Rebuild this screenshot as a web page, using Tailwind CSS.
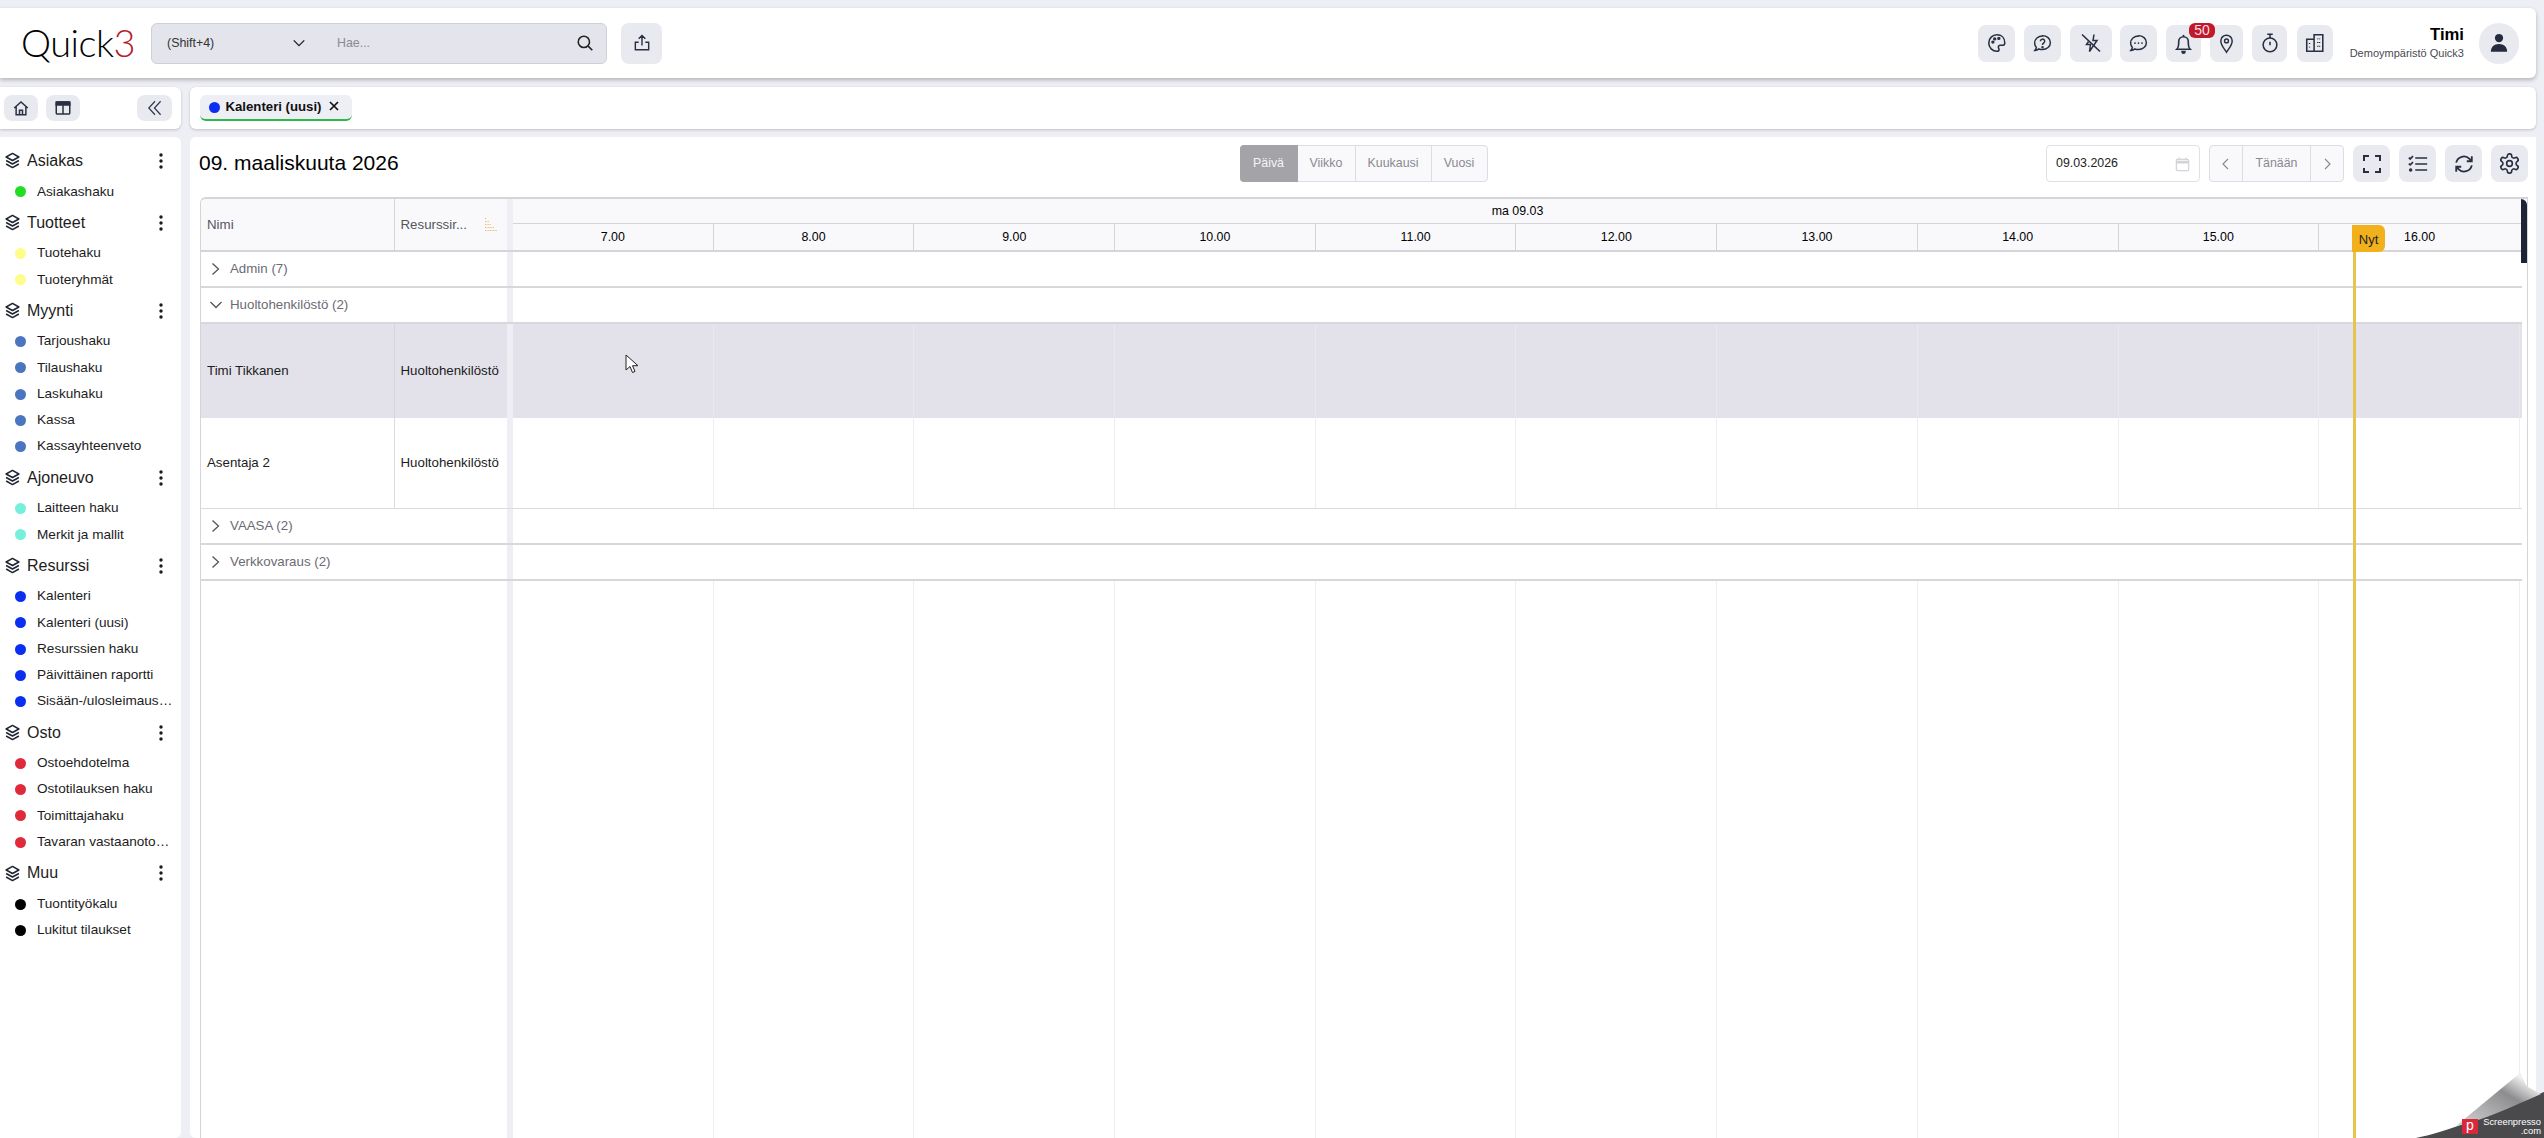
<!DOCTYPE html>
<html lang="fi">
<head>
  <meta charset="UTF-8" />
  <title>Quick3 - Kalenteri</title>
  <script src="https://cdn.jsdelivr.net/npm/@tailwindcss/browser@4"></script>
</head>
<body class="bg-[#eeeef5] h-[1138px] pt-2 overflow-hidden font-['Liberation_Sans',Arial,sans-serif] text-[12.4px] text-[#1c1c22] relative">

  <!-- top bar -->
  <header class="mr-2 h-[70px] bg-white rounded-r-md shadow-[0_2px_4px_rgba(0,0,0,0.25)] flex items-center relative z-10">
    <div class="w-[151px] pl-[21px] font-['Lato',sans-serif] font-light text-[38px] leading-none tracking-[-0.5px] text-black -mt-[2px]">Quick<span class="text-[#b3202e]">3</span></div>
    <div class="w-[456px] h-[41px] bg-[#e4e4ec] border border-[#cfcfd6] rounded-md flex items-center">
      <span class="ml-[15px] w-[125px] text-[#333]">(Shift+4)</span>
      <svg class="w-[14px] h-[14px]" viewBox="0 0 16 16" fill="none" stroke="#222" stroke-width="1.6"><path d="M2 5l6 6 6-6"/></svg>
      <span class="ml-[31px] flex-1 text-[#8b8b92]">Hae...</span>
      <svg class="w-[18px] h-[18px] mr-[12px]" viewBox="0 0 16 16" fill="none" stroke="#222" stroke-width="1.4"><circle cx="7" cy="7" r="5"/><path d="M10.8 10.8L14.5 14.5"/></svg>
    </div>
    <button class="ml-[14px] w-[41px] h-[41px] bg-[#e9e9f0] rounded-lg flex items-center justify-center">
      <svg class="w-[20px] h-[20px]" viewBox="0 0 24 24" fill="none" stroke="#2a3042" stroke-width="1.7"><path d="M12 15V3M8 7l4-4 4 4M8 11H4v9h16v-9h-4"/></svg>
    </button>
    <div class="flex-1"></div>
    <div class="flex items-center mr-[17px]">
      <button class="w-[37px] h-[37px] bg-[#e9e9f0] rounded-lg flex items-center justify-center">
        <svg class="w-[22px] h-[22px]" viewBox="0 0 24 24" fill="none" stroke="#2a3042" stroke-width="1.7"><path d="M12 3a9 9 0 0 0 0 18c1.5 0 2.2-1 2.2-2s-.7-1.5-.7-2.5 1-2 2-2h2.5c1.5 0 2.5-1 2.5-2.5C20.500 6.500 17 3 12 3z"/><circle cx="7.500" cy="11" r="1" fill="#2a3042"/><circle cx="9.500" cy="7.500" r="1" fill="#2a3042"/><circle cx="14" cy="7" r="1" fill="#2a3042"/></svg>
      </button>
      <button class="ml-[9px] w-[37px] h-[37px] bg-[#e9e9f0] rounded-lg flex items-center justify-center">
        <svg class="w-[21px] h-[21px]" viewBox="0 0 24 24" fill="none" stroke="#2a3042" stroke-width="1.7"><path d="M12 3.500c-5 0-9 3.400-9 8 0 2 .8 3.700 2 5-.2 1.200-.8 2.400-1.700 3.500 1.800-.1 3.400-.8 4.600-1.800 1.200.4 2.600.7 4.100.7 5 0 9-3.400 9-8s-4-7.900-9-7.900z"/><path d="M9.500 9.500a2.500 2.500 0 1 1 3.700 2.200c-.8.5-1.200 1-1.200 2"/><circle cx="12" cy="16.200" r=".6" fill="#2a3042"/></svg>
      </button>
      <button class="ml-[9px] w-[42px] h-[37px] bg-[#e9e9f0] rounded-lg flex items-center justify-center">
        <svg class="w-[24px] h-[24px]" viewBox="0 0 24 24" fill="none" stroke="#2a3042" stroke-width="1.7"><path d="M3 3.500l18 17"/><path d="M15 3.500l-1 6h4l-7.500 11 1-7H7.500l2-3" stroke-width="1.500"/></svg>
      </button>
      <button class="ml-[8px] w-[37px] h-[37px] bg-[#e9e9f0] rounded-lg flex items-center justify-center">
        <svg class="w-[21px] h-[21px]" viewBox="0 0 24 24" fill="none" stroke="#2a3042" stroke-width="1.7"><path d="M12 3.500c-5 0-9 3.400-9 8 0 2 .8 3.700 2 5-.2 1.200-.8 2.400-1.700 3.500 1.800-.1 3.400-.8 4.600-1.800 1.200.4 2.600.7 4.100.7 5 0 9-3.400 9-8s-4-7.900-9-7.900z"/><circle cx="8" cy="11.500" r="1" fill="#2a3042" stroke="none"/><circle cx="12" cy="11.500" r="1" fill="#2a3042" stroke="none"/><circle cx="16" cy="11.500" r="1" fill="#2a3042" stroke="none"/></svg>
      </button>
      <button class="ml-[9px] w-[35px] h-[37px] bg-[#e9e9f0] rounded-lg flex items-center justify-center relative">
        <svg class="w-[23px] h-[23px]" viewBox="0 0 24 24" fill="none" stroke="#2a3042" stroke-width="1.7"><path d="M5 18c1.500-1.500 2-3 2-6V10a5 5 0 0 1 10 0v2c0 3 .5 4.500 2 6z"/><path d="M12 3v2"/><path d="M10.500 20.500a1.500 1.500 0 0 0 3 0z" fill="#2a3042"/></svg>
        <span class="absolute -top-[2px] left-[23px] w-[26px] h-[15px] bg-[#c2182b] rounded-md text-[#f7dfe2] text-[14px] leading-[15px] text-center">50</span>
      </button>
      <button class="ml-[9px] w-[33px] h-[37px] bg-[#e9e9f0] rounded-lg flex items-center justify-center">
        <svg class="w-[21px] h-[21px]" viewBox="0 0 24 24" fill="none" stroke="#2a3042" stroke-width="1.7"><path d="M12 22c-2-3.500-6.500-8-6.500-13a6.500 6.500 0 0 1 13 0c0 5-4.500 9.500-6.500 13z"/><circle cx="12" cy="9" r="2.200"/></svg>
      </button>
      <button class="ml-[9px] w-[35px] h-[37px] bg-[#e9e9f0] rounded-lg flex items-center justify-center">
        <svg class="w-[22px] h-[22px]" viewBox="0 0 24 24" fill="none" stroke="#2a3042" stroke-width="1.7"><circle cx="12" cy="14" r="7.500"/><path d="M9 2.500h6M12 2.500v4M12 10.500v4"/></svg>
      </button>
      <button class="ml-[10px] w-[36px] h-[37px] bg-[#e9e9f0] rounded-lg flex items-center justify-center">
        <svg class="w-[22px] h-[22px]" viewBox="0 0 24 24" fill="none" stroke="#2a3042" stroke-width="1.7"><path d="M11 21V3h9.500v18zM11 8H3v13h8"/><path d="M6 12v1M6 16v1M15 7v1M15 11v1M15 15v1M17 7v1M17 11v1M17 15v1" stroke-width="1.500"/></svg>
      </button>
      <div class="w-[131px] text-right">
        <div class="font-bold text-[16.7px] leading-[20px] text-black">Timi</div>
        <div class="text-[11px] leading-[15px] mt-[1px] text-[#4a4a50]">Demoympäristö Quick3</div>
      </div>
      <div class="ml-[15px] w-[40px] h-[41px] rounded-full bg-[#e9e9f0] flex items-center justify-center">
        <svg class="w-[20px] h-[20px]" viewBox="0 0 16 16" fill="#252c40"><circle cx="8" cy="4" r="3.300"/><path d="M1.500 15c0-4 2.500-6.300 6.500-6.300s6.500 2.300 6.500 6.300z"/></svg>
      </div>
    </div>
  </header>

  <!-- toolbar row -->
  <div class="mt-[9px] h-[42px] flex gap-[9px] mr-2">
    <div class="w-[181px] bg-white rounded-r-md shadow-[0_1px_3px_rgba(0,0,0,0.2)] flex items-center pl-[4px] pr-[9px]">
      <button class="w-[34px] h-[26px] bg-[#e9e9f0] rounded-lg flex items-center justify-center">
        <svg class="w-[18px] h-[18px]" viewBox="0 0 24 24" fill="none" stroke="#2a3042" stroke-width="2"><path d="M3 12l9-8 9 8M5.500 10v11h13V10M10 21v-6h4v6"/></svg>
      </button>
      <button class="ml-[8px] w-[34px] h-[26px] bg-[#e9e9f0] rounded-lg flex items-center justify-center">
        <svg class="w-[18px] h-[18px]" viewBox="0 0 24 24" fill="none" stroke="#2a3042" stroke-width="2"><rect x="3" y="4" width="18" height="16" rx="1.500"/><path d="M3 4h18v4H3z" fill="#2a3042"/><path d="M12 8v12"/></svg>
      </button>
      <div class="flex-1"></div>
      <button class="w-[35px] h-[26px] bg-[#e9e9f0] rounded-lg flex items-center justify-center">
        <svg class="w-[18px] h-[18px]" viewBox="0 0 16 16" fill="none" stroke="#333a4c" stroke-width="1.100"><path d="M8 2L2.500 8 8 14M13 2L7.500 8 13 14"/></svg>
      </button>
    </div>
    <div class="flex-1 bg-white rounded-l-md rounded-r-md shadow-[0_1px_3px_rgba(0,0,0,0.2)] flex items-center pl-[9.5px]">
      <div class="w-[152px] h-[26px] bg-[#eeeef5] rounded-md border-b-2 border-b-[#2db84a] flex items-center pl-[9px]">
        <span class="w-[11px] h-[11px] rounded-full bg-[#0a2ff0]"></span>
        <span class="ml-[6px] font-bold text-[13.2px] text-[#111]">Kalenteri (uusi)</span>
        <svg class="ml-[7px] w-[10px] h-[10px] -mt-[2px]" viewBox="0 0 10 10" stroke="#111" stroke-width="1.700"><path d="M1 1l8 8M9 1l-8 8"/></svg>
      </div>
    </div>
  </div>

  <!-- body -->
  <div class="mt-2 h-[1001px] flex gap-[9px] mr-2">
    <nav id="menu" class="w-[181px] bg-white rounded-r-md pt-[6px] shrink-0"></nav>

    <main class="flex-1 min-w-0 bg-white rounded-l-md flex flex-col pl-[10px] pr-[8px]">
      <div class="h-[60px] flex items-start pt-[8px] shrink-0">
        <div class="flex-1 -ml-[1px] text-[21px] leading-[36px] text-black">09. maaliskuuta 2026</div>
        <div class="flex h-[37px] text-[#8a8a90] border border-[#dcdce2] rounded bg-[#f9f9fc]">
          <span class="w-[58px] -my-[1px] -ml-[1px] bg-[#a3a3a8] text-[#f5f5f5] rounded-l flex items-center justify-center">Päivä</span>
          <span class="w-[58px] border-r border-[#dcdce2] flex items-center justify-center">Viikko</span>
          <span class="w-[76px] border-r border-[#dcdce2] flex items-center justify-center">Kuukausi</span>
          <span class="w-[55px] flex items-center justify-center">Vuosi</span>
        </div>
        <div class="flex-1 flex justify-end">
          <div class="w-[154px] h-[37px] border border-[#e0e0e6] rounded flex items-center pl-[9px] pr-[9px] justify-between text-[#222]">
            <span>09.03.2026</span>
            <svg class="w-[15px] h-[16px]" viewBox="0 0 16 16" fill="none" stroke="#d3d3d8" stroke-width="1.400"><rect x="1.500" y="3" width="13" height="12" rx="1"/><path d="M1.500 6h13" stroke-width="3"/><path d="M4.500 1v2M11.500 1v2"/></svg>
          </div>
          <div class="ml-[9px] w-[135px] h-[37px] border border-[#dcdce2] rounded bg-[#f9f9fc] flex text-[#8a8a90]">
            <span class="w-[33px] border-r border-[#dcdce2] flex items-center justify-center">
              <svg class="w-[12px] h-[12px]" viewBox="0 0 12 12" fill="none" stroke="#8a8a90" stroke-width="1.200"><path d="M8 1L3 6l5 5"/></svg>
            </span>
            <span class="w-[68px] border-r border-[#dcdce2] flex items-center justify-center">Tänään</span>
            <span class="flex-1 flex items-center justify-center">
              <svg class="w-[12px] h-[12px]" viewBox="0 0 12 12" fill="none" stroke="#8a8a90" stroke-width="1.200"><path d="M4 1l5 5-5 5"/></svg>
            </span>
          </div>
          <button class="ml-[9px] w-[37px] h-[37px] bg-[#e9e9f0] rounded-lg flex items-center justify-center">
            <svg class="w-[20px] h-[20px]" viewBox="0 0 20 20" fill="none" stroke="#2a3042" stroke-width="2"><path d="M2 7V2h5M13 2h5v5M18 14v4h-5M7 18H2v-4"/></svg>
          </button>
          <button class="ml-[9px] w-[37px] h-[37px] bg-[#e9e9f0] rounded-lg flex items-center justify-center">
            <svg class="w-[22px] h-[22px]" viewBox="0 0 24 24" fill="none" stroke="#2a3042" stroke-width="1.800"><path d="M9 5.500h13M9 12h13M9 18.500h13"/><path d="M2 5l1.500 1.500L6.500 3.500M2 11.500L3.500 13l3-3"/><circle cx="4" cy="18.500" r="1" fill="#2a3042"/></svg>
          </button>
          <button class="ml-[9px] w-[37px] h-[37px] bg-[#e9e9f0] rounded-lg flex items-center justify-center">
            <svg class="w-[22px] h-[22px]" viewBox="0 0 24 24" fill="none" stroke="#2a3042" stroke-width="2"><path d="M3.500 10.500A8.500 8.500 0 0 1 18 6.500l2.500 2.500M20.500 3.500V9H15M20.500 13.500A8.500 8.500 0 0 1 6 17.500L3.500 15M3.500 20.500V15H9"/></svg>
          </button>
          <button class="ml-[9px] w-[37px] h-[37px] bg-[#e9e9f0] rounded-lg flex items-center justify-center">
            <svg class="w-[23px] h-[23px]" viewBox="0 0 24 24" fill="none" stroke="#2a3042" stroke-width="1.700"><path d="M12.220 2h-.44a2 2 0 0 0-2 2v.18a2 2 0 0 1-1 1.730l-.43.25a2 2 0 0 1-2 0l-.15-.08a2 2 0 0 0-2.730.73l-.22.38a2 2 0 0 0 .73 2.730l.15.1a2 2 0 0 1 1 1.720v.51a2 2 0 0 1-1 1.740l-.15.09a2 2 0 0 0-.73 2.730l.22.38a2 2 0 0 0 2.730.73l.15-.08a2 2 0 0 1 2 0l.43.25a2 2 0 0 1 1 1.730V20a2 2 0 0 0 2 2h.44a2 2 0 0 0 2-2v-.18a2 2 0 0 1 1-1.730l.43-.25a2 2 0 0 1 2 0l.15.08a2 2 0 0 0 2.730-.73l.22-.39a2 2 0 0 0-.73-2.730l-.15-.08a2 2 0 0 1-1-1.740v-.5a2 2 0 0 1 1-1.740l.15-.09a2 2 0 0 0 .73-2.730l-.22-.38a2 2 0 0 0-2.730-.73l-.15.08a2 2 0 0 1-2 0l-.43-.25a2 2 0 0 1-1-1.730V4a2 2 0 0 0-2-2z"/><circle cx="12" cy="12" r="3"/></svg>
          </button>
        </div>
      </div>

      <!-- scheduler -->
      <div class="flex-1 relative min-h-0 border-l border-r border-t-2 border-[#d4d4d9] rounded-tl-md pr-[5px] flex flex-col overflow-hidden">
        <div class="flex h-[53px] shrink-0 bg-[#f9f9fc] border-b-2 border-[#d4d4d9]">
          <div class="w-[306px] flex shrink-0 text-[#55555c] text-[13.3px]">
            <div class="w-[193.500px] border-r border-[#d4d4d9] pl-[6px] flex items-center">Nimi</div>
            <div class="flex-1 pl-[6px] pr-[9px] flex items-center justify-between">
              <span>Resurssir...</span>
              <svg class="w-[14px] h-[16px]" viewBox="0 0 14 16" fill="none" stroke="#f0bd6f" stroke-width="1" stroke-dasharray="1 .6"><path d="M1 1.500h2M1 4.500h4M1 7.500h6M1 10.500h9M1 13.500h12"/></svg>
            </div>
          </div>
          <div class="w-[6px] bg-[#eeeef4] shrink-0"></div>
          <div class="flex-1 min-w-0 flex flex-col">
            <div class="h-[25px] flex items-center justify-center text-black border-b border-[#d4d4d9]">ma 09.03</div>
            <div id="hours" class="flex-1 flex text-black"></div>
          </div>
        </div>

        <div id="rows" class="flex-1 flex flex-col min-h-0 text-[13.3px]"></div>

        <!-- now marker and scrollbar lie over the grid -->
        <div class="absolute left-[2152px] top-[26px] bottom-0 w-[3px] bg-[#e8c34f]"></div>
        <div class="absolute left-[2151px] top-[26px] w-[33px] h-[27px] bg-[#f2b01c] rounded-r-md text-[13px] leading-[30px] text-center text-[#222]">Nyt</div>
        <div class="absolute right-0 top-0 w-[6px] h-[64px] bg-[#1e2436] rounded-tr-md"></div>
        <svg class="absolute left-[424px] top-[155px] w-[14px] h-[20px]" viewBox="0 0 14 20" fill="#fff" stroke="#222" stroke-width="1"><path d="M1 1v15l4-3.500 2.500 6 2.500-1-2.500-5.800H13z"/></svg>
      </div>
    </main>
  </div>

  <!-- screenpresso corner -->
  <svg class="absolute right-0 bottom-0 w-[200px] h-[100px]" viewBox="0 0 200 100">
    <defs>
      <linearGradient id="curl" x1="0" y1="1" x2="1" y2="0">
        <stop offset="0" stop-color="#d5d5d8"/>
        <stop offset="0.6" stop-color="#8d8d90"/>
        <stop offset="0.85" stop-color="#f4f4f4"/>
        <stop offset="1" stop-color="#9a9a9c"/>
      </linearGradient>
    </defs>
    <path d="M72 100C100 95 150 75 200 54V100z" fill="#4a4a4d"/>
    <path d="M112 88L176 35c3 4 4 10 8 14l13 7C165 70 140 82 112 88z" fill="url(#curl)"/>
    <rect x="118" y="81" width="16" height="15" fill="#d9283a"/>
    <text x="126" y="92" font-family="Liberation Sans" font-size="14" fill="#fff" text-anchor="middle">p</text>
    <text x="197" y="87" font-family="Liberation Sans" font-size="9.400" fill="#fff" text-anchor="end">Screenpresso</text>
    <text x="197" y="96" font-family="Liberation Sans" font-size="9.400" fill="#fff" text-anchor="end">.com</text>
  </svg>

  <script>
    const layers = '<svg class="w-[17px] h-[17px]" viewBox="0 0 24 24" fill="none" stroke="#1f2533" stroke-width="2.200" stroke-linejoin="round"><path d="M12 2l9 5-9 5-9-5z"/><path d="M3 12l9 5 9-5"/><path d="M3 17l9 5 9-5"/></svg>';
    const kebab = '<svg class="w-[4px] h-[16px]" viewBox="0 0 4 16" fill="#1a1a20"><circle cx="2" cy="2" r="1.700"/><circle cx="2" cy="8" r="1.700"/><circle cx="2" cy="14" r="1.700"/></svg>';

    const menu = [
      ["Asiakas", "bg-[#22dd22]", ["Asiakashaku"]],
      ["Tuotteet", "bg-[#fdfd8a]", ["Tuotehaku", "Tuoteryhmät"]],
      ["Myynti", "bg-[#4a76c0]", ["Tarjoushaku", "Tilaushaku", "Laskuhaku", "Kassa", "Kassayhteenveto"]],
      ["Ajoneuvo", "bg-[#74f0dc]", ["Laitteen haku", "Merkit ja mallit"]],
      ["Resurssi", "bg-[#0a2ff0]", ["Kalenteri", "Kalenteri (uusi)", "Resurssien haku", "Päivittäinen raportti", "Sisään-/ulosleimaus…"]],
      ["Osto", "bg-[#e02a3c]", ["Ostoehdotelma", "Ostotilauksen haku", "Toimittajahaku", "Tavaran vastaanoto…"]],
      ["Muu", "bg-black", ["Tuontityökalu", "Lukitut tilaukset"]],
    ];

    document.getElementById("menu").innerHTML = menu.map(([name, dot, items]) => `
      <div class="h-[35.600px] flex items-center pl-[4px] pr-[18px] text-[16px] text-[#1c1c22]">
        ${layers}<span class="ml-[6px] flex-1">${name}</span>${kebab}
      </div>
      ${items.map((item) => `
        <div class="h-[26.250px] flex items-center pl-[15px] text-[13.600px] text-[#1c1c22]">
          <span class="w-[11px] h-[11px] rounded-full shrink-0 ${dot}"></span>
          <span class="ml-[11px] whitespace-nowrap">${item}</span>
        </div>`).join("")}
    `).join("");

    const hours = ["7.00", "8.00", "9.00", "10.00", "11.00", "12.00", "13.00", "14.00", "15.00", "16.00"];
    document.getElementById("hours").innerHTML = hours.map((h, i) =>
      `<div class="w-[200.700px] shrink-0 flex items-center justify-center ${i < 9 ? "border-r border-[#d4d4d9]" : ""}">${h}</div>`
    ).join("");

    const splitter = '<div class="w-[6px] bg-[#eeeef4] shrink-0"></div>';
    const cells = (line) => hours.map(() => `<div class="w-[200.700px] shrink-0 border-r ${line}"></div>`).join("");

    const groupRow = (name, open) => `
      <div class="h-[36px] shrink-0 flex border-b-2 border-[#d8d8dc]">
        <div class="w-[306px] shrink-0 flex items-center text-[#6b6b73] pl-[9px]">
          <svg class="w-[12px] h-[12px]" viewBox="0 0 12 12" fill="none" stroke="#55555c" stroke-width="1.300"><path d="${open ? "M.5 3l5.500 5.500L11.500 3" : "M2.500 .5l6 5.500-6 5.500"}"/></svg>
          <span class="ml-[8px]">${name}</span>
        </div>
        ${splitter}
      </div>`;

    const personRow = (name, rowClass, h, line, divider) => `
      <div class="${h} shrink-0 flex ${rowClass}">
        <div class="w-[306px] shrink-0 flex text-[#1c1c22]">
          <div class="w-[193.500px] border-r ${divider} pl-[6px] flex items-center">${name}</div>
          <div class="flex-1 pl-[6px] flex items-center">Huoltohenkilöstö</div>
        </div>
        ${splitter}
        <div class="flex-1 min-w-0 flex">${cells(line)}</div>
      </div>`;

    document.getElementById("rows").innerHTML =
      groupRow("Admin (7)", false) +
      groupRow("Huoltohenkilöstö (2)", true) +
      personRow("Timi Tikkanen", "bg-[#e3e2ea]", "h-[94px]", "border-[#e9e9ef]", "border-[#d4d4dc]") +
      personRow("Asentaja 2", "border-b border-[#dcdce0]", "h-[91px]", "border-[#eeeef2]", "border-[#dcdce0]") +
      groupRow("VAASA (2)", false) +
      groupRow("Verkkovaraus (2)", false) +
      `<div class="flex-1 flex min-h-0"><div class="w-[306px] shrink-0"></div>${splitter}<div class="flex-1 min-w-0 flex">${cells("border-[#eeeef2]")}</div></div>`;
  </script>
</body>
</html>
